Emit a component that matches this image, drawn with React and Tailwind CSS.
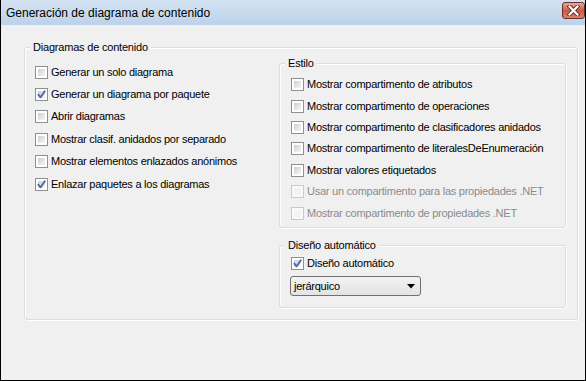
import React from "react";

function Box({ checked, disabled }) {
  return (
    <span
      className={`relative flex w-[13px] h-[13px] shrink-0 border p-[2px] ${
        disabled ? "border-[#cacaca] bg-[#f9f9f9]" : "border-[#8e8f8f] bg-white"
      }`}
    >
      <span
        className={`w-full h-full ${
          disabled
            ? "bg-[#f3f3f3]"
            : "bg-gradient-to-br from-[#cbcfd5] to-[#f6f6f6]"
        }`}
      />
      {checked && (
        <svg
          className="absolute left-0 top-0"
          width="11"
          height="11"
          viewBox="0 0 11 11"
        >
          <path
            d="M2.3 5.6 L4.6 8.3 L8.8 2.2"
            fill="none"
            stroke="#4c6aa8"
            strokeWidth="1.9"
            strokeLinecap="round"
            strokeLinejoin="round"
          />
        </svg>
      )}
    </span>
  );
}

function Row({ label, checked, disabled, h = "h-[22.4px]" }) {
  return (
    <div className={`flex items-center gap-[3px] ${h}`}>
      <Box checked={checked} disabled={disabled} />
      <span
        className={`text-[11px] leading-none tracking-[-0.25px] whitespace-nowrap ${
          disabled ? "text-[#8b8b8b]" : "text-black"
        }`}
      >
        {label}
      </span>
    </div>
  );
}

function Group({ title, className, children }) {
  return (
    <div
      className={`relative rounded-[3px] border border-[#d5dfe5] shadow-[inset_1px_1px_0_#ffffff,1px_1px_0_#ffffff] ${className}`}
    >
      <span className="absolute left-[5px] top-[-7px] bg-[#f0f0f0] px-[3px] text-[11px] leading-[13px] tracking-[-0.2px] text-black whitespace-nowrap">
        {title}
      </span>
      {children}
    </div>
  );
}

export default function App() {
  return (
    <div className="w-[586px] h-[381px] bg-[#f0f0f0] border-l border-r border-b border-black flex flex-col font-['Liberation_Sans',Arial,sans-serif] overflow-hidden">
      <div className="h-[25px] shrink-0 bg-gradient-to-b from-[#d4e3f3] to-[#bcd2ea] flex items-center justify-between pl-[5px] pr-0">
        <span className="text-[12px] leading-none text-black mt-[1px]">
          Generación de diagrama de contenido
        </span>
        <div className="w-[23px] h-[17px] mt-[-4px] rounded-[3px] border border-[#6b2f2a] bg-gradient-to-b from-[#e9aa9a] via-[#c95a42] to-[#d9826a] flex items-center justify-center">
          <svg width="13" height="11" viewBox="0 0 13 11">
            <path
              d="M2.5 1.5 L10.5 9.5 M10.5 1.5 L2.5 9.5"
              stroke="#5a2a25"
              strokeWidth="4"
              strokeLinecap="square"
            />
            <path
              d="M2.5 1.5 L10.5 9.5 M10.5 1.5 L2.5 9.5"
              stroke="#ffffff"
              strokeWidth="2.2"
              strokeLinecap="square"
            />
          </svg>
        </div>
      </div>
      <div className="pl-[23px] pt-[22px]">
        <Group title="Diagramas de contenido" className="w-[554px] h-[273px] flex">
          <div className="w-[254px] shrink-0 pl-[10px] pt-[13px] flex flex-col">
            <Row label="Generar un solo diagrama" />
            <Row label="Generar un diagrama por paquete" checked />
            <Row label="Abrir diagramas" />
            <Row label="Mostrar clasif. anidados por separado" />
            <Row label="Mostrar elementos enlazados anónimos" />
            <Row label="Enlazar paquetes a los diagramas" checked />
          </div>
          <div className="pt-[15px] flex flex-col">
            <Group title="Estilo" className="w-[287px] h-[165px] pl-[11px] pt-[10px] flex flex-col">
              <Row h="h-[21.4px]" label="Mostrar compartimento de atributos" />
              <Row h="h-[21.4px]" label="Mostrar compartimento de operaciones" />
              <Row h="h-[21.4px]" label="Mostrar compartimento de clasificadores anidados" />
              <Row h="h-[21.4px]" label="Mostrar compartimento de literalesDeEnumeración" />
              <Row h="h-[21.4px]" label="Mostrar valores etiquetados" />
              <Row h="h-[21.4px]" label="Usar un compartimento para las propiedades .NET" disabled />
              <Row h="h-[21.4px]" label="Mostrar compartimento de propiedades .NET" disabled />
            </Group>
            <Group title="Diseño automático" className="mt-[17px] w-[287px] h-[63px] pl-[10px] pt-[7px] flex flex-col">
              <div className="pl-[1px]">
                <Row h="h-[21.4px]" label="Diseño automático" checked />
              </div>
              <div className="mt-[2px] w-[131px] h-[20px] rounded-[3px] border border-[#707070] bg-gradient-to-b from-[#f3f3f3] to-[#e3e3e3] flex items-center justify-between pl-[3px] pr-[5px]">
                <span className="text-[11px] leading-none tracking-[-0.25px] text-black">jerárquico</span>
                <svg width="8" height="5" viewBox="0 0 8 5">
                  <path d="M0 0 L8 0 L4 4.5 Z" fill="#000" />
                </svg>
              </div>
            </Group>
          </div>
        </Group>
      </div>
    </div>
  );
}
